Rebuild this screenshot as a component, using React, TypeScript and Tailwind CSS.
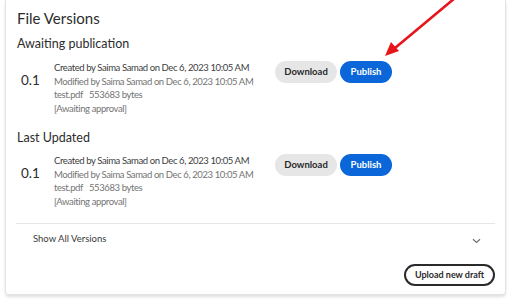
const font = { fontFamily: "Lato, 'Open Sans', sans-serif" };

type Version = {
  number: string;
  created: string;
  modified: string;
  file: string;
  size: string;
  status: string;
};

const draft: Version = {
  number: "0.1",
  created: "Created by Saima Samad on Dec 6, 2023 10:05 AM",
  modified: "Modified by Saima Samad on Dec 6, 2023 10:05 AM",
  file: "test.pdf",
  size: "553683 bytes",
  status: "[Awaiting approval]",
};

function VersionRow({ v }: { v: Version }) {
  return (
    <div className="flex items-start pl-[15px] pr-3">
      <div className="w-[33px] pt-[11px] text-[13.5px] leading-[16px] text-[#2c2c2c]">{v.number}</div>
      <div className="w-[221px] whitespace-nowrap text-[9.5px] leading-[13.7px] tracking-[-0.4px] text-[#747474]">
        <p className="text-[#404040]">{v.created}</p>
        <p>{v.modified}</p>
        <p>
          {v.file}
          <span className="ml-[6px]">{v.size}</span>
        </p>
        <p>{v.status}</p>
      </div>
      <div className="flex gap-[3px]">
        <button
          type="button"
          className="h-[22px] w-[62px] rounded-full bg-[#e6e6e6] text-[9.5px] font-bold text-[#2a2a2a]"
        >
          Download
        </button>
        <button
          type="button"
          className="h-[22px] w-[52px] rounded-full bg-[#0a66d9] text-[9.5px] font-bold text-white"
        >
          Publish
        </button>
      </div>
    </div>
  );
}

export default function App() {
  return (
    <div className="relative h-[305px] w-[509px] overflow-hidden bg-white" style={font}>
      <div className="ml-[5px] flex h-[295px] w-[501px] flex-col rounded-b-[4px] border border-t-0 border-[#e3e3e3] shadow-[0_2px_3px_rgba(0,0,0,0.12)]">
        <h2 className="pl-[11px] pt-[8px] text-[15px] leading-[20px] text-[#2c2c2c]">File Versions</h2>
        <h3 className="mt-[8px] pl-[11px] text-[12.5px] leading-[16px] text-[#2c2c2c]">Awaiting publication</h3>
        <div className="mt-[9px]">
          <VersionRow v={draft} />
        </div>
        <h3 className="mt-[14px] pl-[11px] text-[12.5px] leading-[16px] text-[#2c2c2c]">Last Updated</h3>
        <div className="mt-[8px]">
          <VersionRow v={draft} />
        </div>
        <div className="mx-[10px] mt-[14px] border-t border-[#e6e6e6]" />
        <div className="flex items-center justify-between pl-[27px] pr-[24px] pt-[8px]">
          <span className="text-[9.5px] leading-[14px] text-[#3a3a3a]">Show All Versions</span>
          <svg width="9" height="6" viewBox="0 0 9 6" className="mt-[5px]">
            <path d="M1 1.2l3.5 3.3 3.5-3.3" fill="none" stroke="#707070" strokeWidth="1.2" />
          </svg>
        </div>
        <div className="mt-[18px] flex justify-end pr-[10px]">
          <button
            type="button"
            className="h-[22px] w-[91px] rounded-full border-2 border-[#2a2a2a] text-[9px] font-bold text-[#2a2a2a]"
          >
            Upload new draft
          </button>
        </div>
      </div>

      <svg className="pointer-events-none absolute left-0 top-0" width="509" height="305">
        <line x1="455" y1="-2" x2="395" y2="48" stroke="#e8141b" strokeWidth="2.6" />
        <polygon points="385,56 391,42 399,51" fill="#e8141b" />
      </svg>
    </div>
  );
}
